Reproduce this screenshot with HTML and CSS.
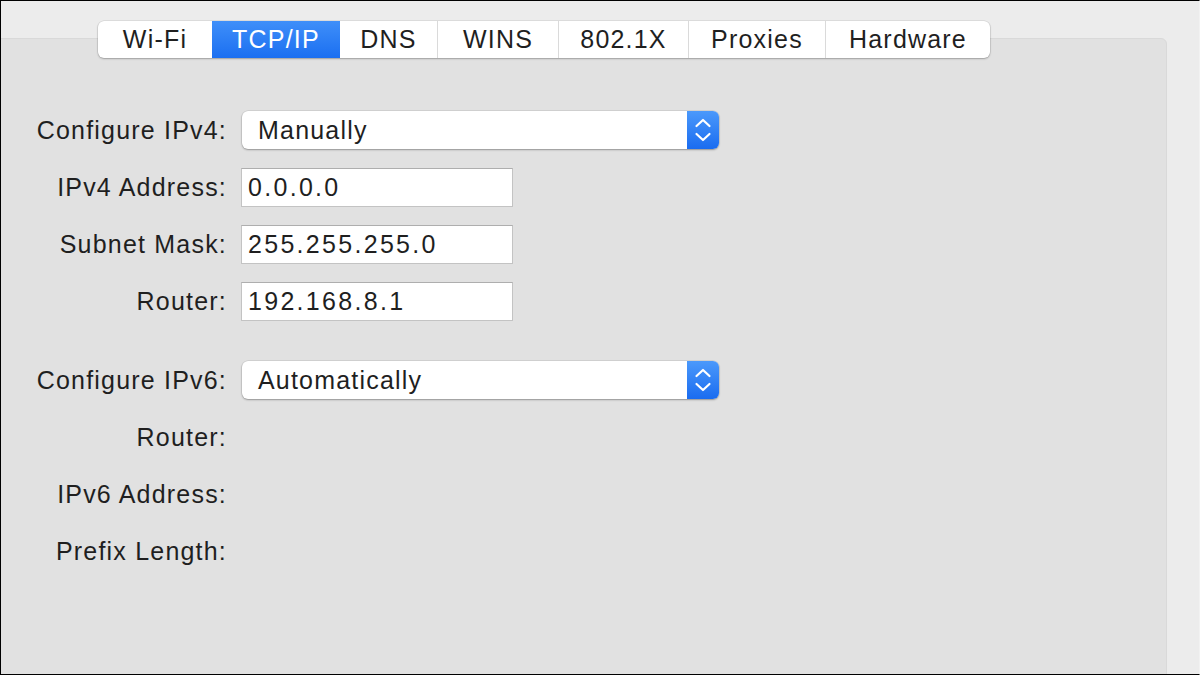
FILE: index.html
```html
<!DOCTYPE html>
<html lang="en">
<head>
    <meta charset="UTF-8">
    <meta name="viewport" content="width=device-width, initial-scale=1.0">
    <title>Network - TCP/IP</title>
    <link rel="stylesheet" href="styles.css">
</head>
<body>
    <div class="window">
        <div class="tabs">
            <div class="tab tab-wifi">Wi-Fi</div>
            <div class="tab tab-tcp selected">TCP/IP</div>
            <div class="tab tab-dns">DNS</div>
            <div class="tab tab-wins">WINS</div>
            <div class="tab tab-8021x">802.1X</div>
            <div class="tab tab-proxies">Proxies</div>
            <div class="tab tab-hardware">Hardware</div>
        </div>

        <section class="panel">
            <div class="form">
                <label class="label">Configure IPv4:</label>
                <div class="popup">
                    <span class="popup-value">Manually</span>
                    <span class="stepper">
                        <svg width="18" height="28" viewBox="0 0 18 28">
                            <path d="M2.5 10 L9 4 L15.5 10" fill="none" stroke="#fff" stroke-width="2.2" stroke-linecap="round" stroke-linejoin="round"/>
                            <path d="M2.5 18 L9 24 L15.5 18" fill="none" stroke="#fff" stroke-width="2.2" stroke-linecap="round" stroke-linejoin="round"/>
                        </svg>
                    </span>
                </div>

                <label class="label">IPv4 Address:</label>
                <div class="field">0.0.0.0</div>

                <label class="label">Subnet Mask:</label>
                <div class="field">255.255.255.0</div>

                <label class="label">Router:</label>
                <div class="field">192.168.8.1</div>

                <div class="spacer"></div>

                <label class="label">Configure IPv6:</label>
                <div class="popup">
                    <span class="popup-value">Automatically</span>
                    <span class="stepper">
                        <svg width="18" height="28" viewBox="0 0 18 28">
                            <path d="M2.5 10 L9 4 L15.5 10" fill="none" stroke="#fff" stroke-width="2.2" stroke-linecap="round" stroke-linejoin="round"/>
                            <path d="M2.5 18 L9 24 L15.5 18" fill="none" stroke="#fff" stroke-width="2.2" stroke-linecap="round" stroke-linejoin="round"/>
                        </svg>
                    </span>
                </div>

                <label class="label">Router:</label>
                <div class="empty"></div>

                <label class="label">IPv6 Address:</label>
                <div class="empty"></div>

                <label class="label">Prefix Length:</label>
                <div class="empty"></div>
            </div>
        </section>
    </div>
</body>
</html>
```

FILE: styles.css
```css
body {
    margin: 0;
    padding: 0;
    font-family: 'Liberation Sans', Arial, sans-serif;
    background-color: #ececec;
}
.window {
    width: 1200px;
    height: 675px;
    box-sizing: border-box;
    border: 1px solid #000;
    border-right-color: #f2f2f2;
    background-color: #ececec;
    padding-top: 20px;
    overflow: hidden;
}
.tabs {
    display: flex;
    width: max-content;
    height: 37px;
    margin-left: 97px;
    margin-bottom: -20px;
    position: relative;
    z-index: 1;
    background-color: #ffffff;
    border-radius: 6px;
    box-shadow: 0 1px 2px rgba(0, 0, 0, 0.25), 0 0 0 0.5px rgba(0, 0, 0, 0.12);
    overflow: hidden;
}
.tab {
    display: flex;
    align-items: center;
    justify-content: center;
    font-size: 25px;
    letter-spacing: 1.2px;
    color: #1f1f1f;
    border-left: 1px solid #dadada;
    box-sizing: border-box;
}
.tab:first-child {
    border-left: none;
}
.tab.selected {
    background: linear-gradient(#3f8ff9, #1b6ff1);
    color: #ffffff;
    border-left: none;
}
.tab.selected + .tab {
    border-left: none;
}
.tab-wifi { width: 114px; }
.tab-tcp { width: 128px; }
.tab-dns { width: 97px; }
.tab-wins { width: 121px; }
.tab-8021x { width: 130px; }
.tab-proxies { width: 137px; }
.tab-hardware { width: 165px; }

.panel {
    margin-left: -20px;
    width: 1186px;
    height: 700px;
    box-sizing: border-box;
    background-color: #e1e1e1;
    border: 1px solid #d9d9d9;
    border-radius: 6px;
    padding-top: 72px;
}
.form {
    display: grid;
    grid-template-columns: 245px 480px;
    grid-template-rows: repeat(4, 38px) 3px repeat(4, 38px);
    column-gap: 14px;
    row-gap: 19px;
    align-items: center;
}
.label {
    text-align: right;
    font-size: 25px;
    letter-spacing: 1.2px;
    color: #1f1f1f;
}
.spacer {
    grid-column: 1 / span 2;
    height: 3px;
}
.popup {
    display: flex;
    align-items: center;
    width: 477px;
    height: 38px;
    margin-left: 1px;
    background-color: #ffffff;
    border-radius: 6px;
    box-shadow: 0 1px 2px rgba(0, 0, 0, 0.3), 0 0 0 0.5px rgba(0, 0, 0, 0.12);
    overflow: hidden;
}
.popup-value {
    flex: 1;
    padding-left: 16px;
    font-size: 25px;
    letter-spacing: 1.2px;
    color: #1f1f1f;
}
.stepper {
    width: 32px;
    height: 38px;
    display: flex;
    align-items: center;
    justify-content: center;
    background: linear-gradient(#4b99fb, #1a6cf0);
}
.field {
    width: 272px;
    height: 39px;
    box-sizing: border-box;
    background-color: #ffffff;
    border: 1px solid #c3c3c3;
    border-top-color: #aeaeae;
    padding-left: 6px;
    display: flex;
    align-items: center;
    font-size: 25px;
    letter-spacing: 2.3px;
    color: #1f1f1f;
}
.empty {
    height: 38px;
}
```
